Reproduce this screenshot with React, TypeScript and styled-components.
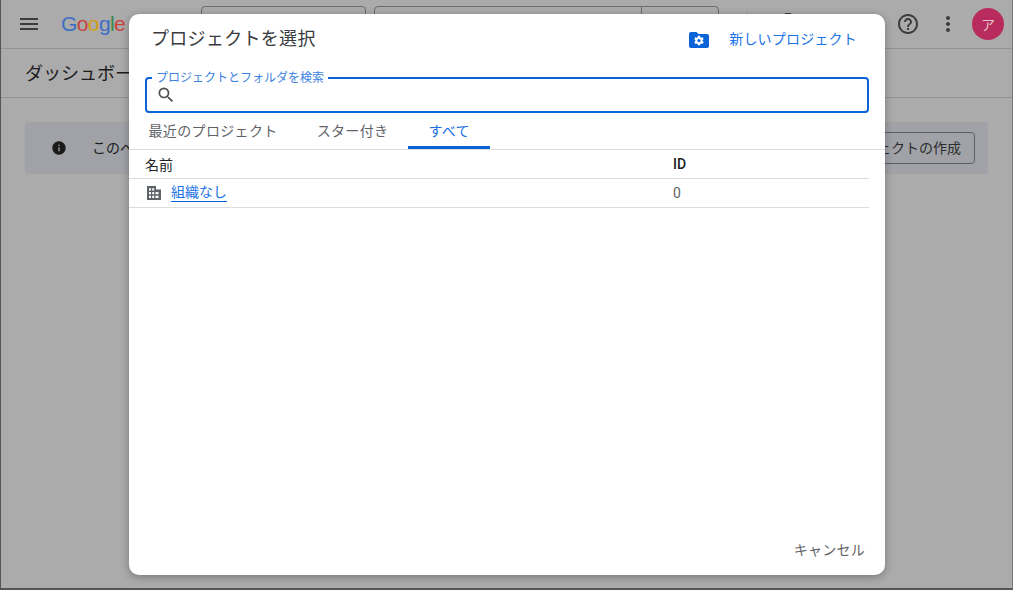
import React from 'react'
import styled, { createGlobalStyle } from 'styled-components'
import { MdDeleteOutline, MdHelpOutline, MdInfo, MdMenu, MdMoreVert, MdSearch, MdStar } from 'react-icons/md'

const FONT = `Roboto, "Noto Sans CJK JP", sans-serif`

const Global = createGlobalStyle`
	html, body {
		margin: 0;
		height: 100%;
		overflow: hidden;
	}
	body {
		font-family: ${FONT};
		color: #202124;
	}
`

const Page = styled.div`
	position: relative;
	width: 1013px;
	height: 590px;
	box-sizing: border-box;
	background: #ababab;
	border-left: 1px solid #555;
	border-right: 1px solid #777;
	border-bottom: 2px solid #555;
	overflow: hidden;
`

const Header = styled.header`
	height: 49px;
	box-sizing: border-box;
	display: flex;
	align-items: center;
	padding: 0 8px 0 16px;
	border-bottom: 1px solid #939393;
`

const HeaderIcon = styled.span`
	display: flex;
	color: #3c3c3c;
`

const PeekIcon = styled(HeaderIcon)<{ $gap: number; $lift: number }>`
	margin-top: ${p => -2 * p.$lift}px;
	margin-right: ${p => p.$gap}px;
`

const Logo = styled.span`
	margin-left: 20px;
	width: 140px;
	font-family: "Liberation Sans", sans-serif;
	font-size: 21px;
	letter-spacing: -0.6px;
`

const Letter = styled.span<{ $color: string }>`
	color: ${p => p.$color};
`

const Field = styled.div<{ $width: number }>`
	width: ${p => p.$width}px;
	height: 36px;
	box-sizing: border-box;
	margin-right: 8px;
	border: 1px solid #6c6c6c;
	border-radius: 4px;
	display: flex;
	justify-content: flex-end;
`

const FieldAction = styled.span`
	width: 76px;
	border-left: 1px solid #6c6c6c;
`

const Spacer = styled.div`
	flex: 1;
`

const HeaderActions = styled.div`
	display: flex;
	align-items: center;
`

const HelpIcon = styled(HeaderIcon)`
	margin-right: 16px;
`

const MoreIcon = styled(HeaderIcon)`
	margin-right: 12px;
`

const Avatar = styled.span`
	width: 32px;
	height: 32px;
	border-radius: 50%;
	background: #b72c5c;
	color: #e6c3cf;
	font-size: 14px;
	display: flex;
	align-items: center;
	justify-content: center;
`

const SubHeader = styled.div`
	height: 49px;
	box-sizing: border-box;
	padding: 0 24px 2px;
	display: flex;
	align-items: center;
	border-bottom: 1px solid #939393;
	font-size: 18px;
	color: #1c1c1c;
`

const Banner = styled.div`
	margin: 24px 24px 0;
	height: 52px;
	box-sizing: border-box;
	background: #a0a2a7;
	border-radius: 4px;
	display: flex;
	align-items: center;
	padding: 0 13px 0 26px;
	font-size: 14px;
	color: #1a1a1a;
`

const BannerText = styled.span`
	margin: 0 0 2px 25px;
	flex: 1;
`

const BannerButton = styled.span`
	height: 32px;
	box-sizing: border-box;
	padding: 0 13px 2px;
	display: flex;
	align-items: center;
	border: 1px solid #5f6063;
	border-radius: 4px;
	color: #2c2c2c;
`

const Dialog = styled.div`
	position: absolute;
	left: 128px;
	top: 14px;
	width: 756px;
	height: 561px;
	background: #fff;
	border-radius: 10px;
	box-shadow: 0 2px 8px rgba(0, 0, 0, 0.3);
	display: flex;
	flex-direction: column;
`

const DialogHead = styled.div`
	display: flex;
	align-items: center;
	height: 48px;
	padding: 0 28px 0 22px;
`

const DialogTitle = styled.h2`
	margin: 0 0 2px;
	flex: 1;
	font-size: 18px;
	font-weight: 400;
	letter-spacing: 0.3px;
	color: #3a3b3e;
`

const NewProject = styled.a`
	display: flex;
	align-items: center;
	gap: 20px;
	font-size: 14px;
	letter-spacing: 0.2px;
	color: #1a73e8;
`

const FolderSvg = styled.svg`
	margin-top: 4px;
`

const SearchBox = styled.div`
	position: relative;
	margin: 15px 16px 0;
	height: 32px;
	border: 2px solid #0b63d8;
	border-radius: 4px;
	display: flex;
	align-items: center;
	padding-left: 9px;
	color: #4d4f52;
`

const SearchLabel = styled.span`
	position: absolute;
	left: 5px;
	top: -8px;
	padding: 0 4px;
	background: #fff;
	font-size: 12px;
	line-height: 14px;
	color: #3b82e0;
`

const Tabs = styled.div`
	display: flex;
	height: 37px;
	box-sizing: border-box;
	border-bottom: 1px solid #dadce0;
	font-size: 14px;
	letter-spacing: 0.35px;
`

const Tab = styled.div<{ $active?: boolean }>`
	padding: 0 ${p => (p.$active ? 20.5 : 19.5)}px;
	display: flex;
	align-items: center;
	box-sizing: border-box;
	color: ${p => (p.$active ? '#1a6fe0' : '#5f6368')};
	border-bottom: 3px solid ${p => (p.$active ? '#0b63d8' : 'transparent')};
`

const Row = styled.div<{ $head?: boolean }>`
	display: grid;
	grid-template-columns: 528px 1fr;
	align-items: center;
	height: 29px;
	box-sizing: border-box;
	margin-right: 16px;
	padding-left: 16px;
	padding-bottom: ${p => (p.$head ? 1 : 0)}px;
	border-bottom: 1px solid #dadce0;
	font-size: 14px;
	color: ${p => (p.$head ? '#202124' : '#5f6368')};
`

const IdHead = styled.span`
	font-weight: 500;
`

const NameCell = styled.div`
	display: flex;
	align-items: center;
	gap: 10px;
	padding-left: 2px;
`

const OrgLink = styled.a`
	color: #1a73e8;
	font-size: 14px;
	line-height: 17px;
	border-bottom: 1px solid #0b63d8;
`

const DialogBody = styled.div`
	flex: 1;
`

const DialogFoot = styled.div`
	display: flex;
	justify-content: flex-end;
	padding: 0 20px 16px;
	font-size: 14px;
	letter-spacing: 0.25px;
	color: #5f6368;
`

const FolderGearIcon = () => (
	<FolderSvg width="20" height="16" viewBox="0 0 20 16">
		<path fill="#0b63d8" d="M2 0h5.5l2 2H18c1.1 0 2 .9 2 2v10c0 1.1-.9 2-2 2H2c-1.1 0-2-.9-2-2V2C0 .9.9 0 2 0z" />
		<g transform="translate(4.2 2.8) scale(0.48)">
			<path fill="#fff" d="M19.4 13c.04-.3.1-.65.1-1s-.06-.7-.1-1l2.1-1.65c.2-.15.25-.4.12-.64l-2-3.46c-.12-.22-.38-.3-.6-.22l-2.5 1c-.52-.4-1.08-.73-1.7-.98l-.37-2.65A.5.5 0 0 0 14 2h-4a.5.5 0 0 0-.5.42l-.37 2.65c-.62.25-1.18.58-1.7.98l-2.5-1c-.22-.08-.48 0-.6.22l-2 3.46c-.13.22-.07.5.12.64L4.6 11c-.04.32-.1.66-.1 1s.06.68.1 1l-2.1 1.65c-.2.15-.25.42-.12.64l2 3.46c.12.22.38.3.6.22l2.5-1c.52.4 1.08.73 1.7.98l.37 2.65c.05.24.26.42.5.42h4c.25 0 .45-.18.5-.42l.37-2.65c.62-.25 1.18-.58 1.7-.98l2.5 1c.22.08.48 0 .6-.22l2-3.46c.13-.22.07-.5-.12-.64L19.4 13zM12 15.5a3.5 3.5 0 1 1 0-7 3.5 3.5 0 0 1 0 7z" />
		</g>
	</FolderSvg>
)

const OrgIcon = () => (
	<svg width="14" height="14" viewBox="0 0 14 14">
		<path fill="#5f6368" fillRule="evenodd" d="M0 0h9v3.5h5V14H0V0zM2 2.2v2.2h2V2.2H2zm3.2 0v2.2h2V2.2h-2zM2 6v2.2h2V6H2zm3.2 0v2.2h2V6h-2zm3.3 0v2.2h3V6h-3zM2 9.8V12h2V9.8H2zm3.2 0V12h2V9.8h-2zm3.3 0V12h3V9.8h-3z" />
	</svg>
)

const App: React.FC = () => {
	return (
		<Page>
			<Global />
			<Header>
				<HeaderIcon><MdMenu size={24} /></HeaderIcon>
				<Logo>
					<Letter $color="#3b6fc4">G</Letter>
					<Letter $color="#c9423a">o</Letter>
					<Letter $color="#d09e12">o</Letter>
					<Letter $color="#3b6fc4">g</Letter>
					<Letter $color="#3b8a4c">l</Letter>
					<Letter $color="#c9423a">e</Letter>
				</Logo>
				<Field $width={165} />
				<Field $width={345}><FieldAction /></Field>
				<Spacer />
				<HeaderActions>
					<PeekIcon $gap={17} $lift={1.5}><MdStar size={24} /></PeekIcon>
					<PeekIcon $gap={96} $lift={2.5}><MdDeleteOutline size={24} /></PeekIcon>
					<HelpIcon><MdHelpOutline size={24} /></HelpIcon>
					<MoreIcon><MdMoreVert size={24} /></MoreIcon>
					<Avatar>ア</Avatar>
				</HeaderActions>
			</Header>
			<SubHeader>ダッシュボード</SubHeader>
			<Banner>
				<MdInfo size={16} />
				<BannerText>このページ</BannerText>
				<BannerButton>プロジェクトの作成</BannerButton>
			</Banner>
			<Dialog>
				<DialogHead>
					<DialogTitle>プロジェクトを選択</DialogTitle>
					<NewProject>
						<FolderGearIcon />
						新しいプロジェクト
					</NewProject>
				</DialogHead>
				<SearchBox>
					<SearchLabel>プロジェクトとフォルダを検索</SearchLabel>
					<MdSearch size={20} />
				</SearchBox>
				<Tabs>
					<Tab>最近のプロジェクト</Tab>
					<Tab>スター付き</Tab>
					<Tab $active>すべて</Tab>
				</Tabs>
				<Row $head>
					<span>名前</span>
					<IdHead>ID</IdHead>
				</Row>
				<Row>
					<NameCell>
						<OrgIcon />
						<OrgLink>組織なし</OrgLink>
					</NameCell>
					<span>0</span>
				</Row>
				<DialogBody />
				<DialogFoot>キャンセル</DialogFoot>
			</Dialog>
		</Page>
	)
}

export default App
